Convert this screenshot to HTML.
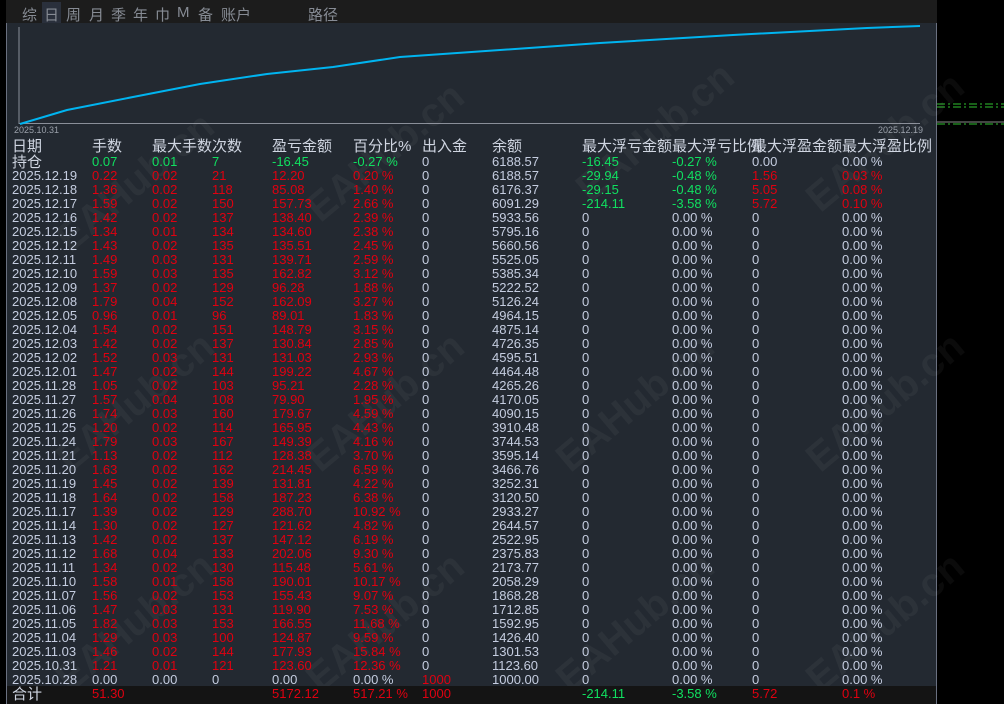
<!DOCTYPE html>
<html style="width:1004px;height:704px;overflow:hidden"><head><meta charset="utf-8"><style>
*{margin:0;padding:0}
body{width:1004px;height:704px;background:#000;overflow:hidden;font-family:"Liberation Sans","Noto Sans CJK SC",sans-serif}
#wrap{position:relative;width:1004px;height:704px;overflow:hidden}
#top{position:absolute;left:6px;top:0;width:931px;height:23px;background:#1c1c1c}
#top span{position:absolute;top:4px;font-size:15px;color:#868b94}
#panel{position:absolute;left:6px;top:23px;width:931px;height:681px;background:#232931;border-left:1px solid #6a7080;border-right:1px solid #6a7080;box-sizing:border-box}
.row{position:absolute;left:0;height:14px;line-height:14px;font-size:13px;color:#c5cde0;width:937px}
.row i{position:absolute;font-style:normal;white-space:nowrap}
.row i:nth-child(1){left:12px}.row i:nth-child(2){left:92px}.row i:nth-child(3){left:152px}.row i:nth-child(4){left:212px}
.row i:nth-child(5){left:272px}.row i:nth-child(6){left:353px}.row i:nth-child(7){left:422px}.row i:nth-child(8){left:492px}
.row i:nth-child(9){left:582px}.row i:nth-child(10){left:672px}.row i:nth-child(11){left:752px}.row i:nth-child(12){left:842px}
.r{color:#e00010}.n{color:#10e060}
.h{font-size:15px;height:16px;line-height:16px;color:#d0d6e2}
.wm{position:absolute;font-size:40px;font-weight:bold;color:rgba(255,255,255,0.045);transform:rotate(-40deg);white-space:nowrap}
</style></head><body><div id="wrap">
<div id="top">
<span style="left:16px">综</span><span style="left:36px;top:2px;background:#2a303c;padding:2px 2px;">日</span><span style="left:60px">周</span><span style="left:83px">月</span><span style="left:105px">季</span><span style="left:127px">年</span><span style="left:149px">巾</span><span style="left:171px">M</span><span style="left:192px">备</span><span style="left:215px">账户</span><span style="left:302px">路径</span>
</div>
<div id="panel"></div>
<svg style="position:absolute;left:0;top:0" width="1004" height="140">
<line x1="19" y1="27" x2="19" y2="124" stroke="#8a8f99" stroke-width="1"/>
<line x1="19" y1="123.5" x2="920" y2="123.5" stroke="#8a8f99" stroke-width="1"/>
<polyline fill="none" stroke="#00b4f0" stroke-width="2" points="20,124 67,110 133,97 200,84 267,74 333,67 400,57 600,43 733,35 867,28 920,26"/>
<text x="14" y="133" font-size="9" fill="#9aa0aa" font-family="Liberation Sans">2025.10.31</text>
<text x="878" y="133" font-size="9" fill="#9aa0aa" font-family="Liberation Sans">2025.12.19</text>
<line x1="937" y1="107" x2="1004" y2="107" stroke="#30c030" stroke-width="1" stroke-dasharray="8,3,2,3"/>
<line x1="937" y1="104" x2="1004" y2="104" stroke="#30c030" stroke-width="1" stroke-dasharray="8,3,2,3"/>
<line x1="937" y1="122" x2="1004" y2="122" stroke="#888" stroke-width="1"/>
<line x1="937" y1="124" x2="1004" y2="124" stroke="#30c030" stroke-width="1" stroke-dasharray="8,3,2,3"/>
</svg>
<div class="wm" style="left:40px;top:160px">EAHub.cn</div>
<div class="wm" style="left:290px;top:130px">EAHub.cn</div>
<div class="wm" style="left:560px;top:110px">EAHub.cn</div>
<div class="wm" style="left:790px;top:120px">EAHub.cn</div>
<div class="wm" style="left:40px;top:380px">EAHub.cn</div>
<div class="wm" style="left:290px;top:380px">EAHub.cn</div>
<div class="wm" style="left:540px;top:380px">EAHub.cn</div>
<div class="wm" style="left:790px;top:380px">EAHub.cn</div>
<div class="wm" style="left:40px;top:600px">EAHub.cn</div>
<div class="wm" style="left:290px;top:600px">EAHub.cn</div>
<div class="wm" style="left:540px;top:600px">EAHub.cn</div>
<div class="wm" style="left:790px;top:600px">EAHub.cn</div>

<div class="row h" style="top:139px"><i>日期</i><i>手数</i><i>最大手数</i><i>次数</i><i>盈亏金额</i><i>百分比%</i><i>出入金</i><i>余额</i><i>最大浮亏金额</i><i>最大浮亏比例</i><i>最大浮盈金额</i><i>最大浮盈比例</i></div>
<div class="row" style="top:155px"><i class="h" style="font-size:15px">持仓</i><i class="n">0.07</i><i class="n">0.01</i><i class="n">7</i><i class="n">-16.45</i><i class="n">-0.27 %</i><i>0</i><i>6188.57</i><i class="n">-16.45</i><i class="n">-0.27 %</i><i>0.00</i><i>0.00 %</i></div>
<div class="row" style="top:169px"><i>2025.12.19</i><i class="r">0.22</i><i class="r">0.02</i><i class="r">21</i><i class="r">12.20</i><i class="r">0.20 %</i><i>0</i><i>6188.57</i><i class="n">-29.94</i><i class="n">-0.48 %</i><i class="r">1.56</i><i class="r">0.03 %</i></div>
<div class="row" style="top:183px"><i>2025.12.18</i><i class="r">1.36</i><i class="r">0.02</i><i class="r">118</i><i class="r">85.08</i><i class="r">1.40 %</i><i>0</i><i>6176.37</i><i class="n">-29.15</i><i class="n">-0.48 %</i><i class="r">5.05</i><i class="r">0.08 %</i></div>
<div class="row" style="top:197px"><i>2025.12.17</i><i class="r">1.59</i><i class="r">0.02</i><i class="r">150</i><i class="r">157.73</i><i class="r">2.66 %</i><i>0</i><i>6091.29</i><i class="n">-214.11</i><i class="n">-3.58 %</i><i class="r">5.72</i><i class="r">0.10 %</i></div>
<div class="row" style="top:211px"><i>2025.12.16</i><i class="r">1.42</i><i class="r">0.02</i><i class="r">137</i><i class="r">138.40</i><i class="r">2.39 %</i><i>0</i><i>5933.56</i><i>0</i><i>0.00 %</i><i>0</i><i>0.00 %</i></div>
<div class="row" style="top:225px"><i>2025.12.15</i><i class="r">1.34</i><i class="r">0.01</i><i class="r">134</i><i class="r">134.60</i><i class="r">2.38 %</i><i>0</i><i>5795.16</i><i>0</i><i>0.00 %</i><i>0</i><i>0.00 %</i></div>
<div class="row" style="top:239px"><i>2025.12.12</i><i class="r">1.43</i><i class="r">0.02</i><i class="r">135</i><i class="r">135.51</i><i class="r">2.45 %</i><i>0</i><i>5660.56</i><i>0</i><i>0.00 %</i><i>0</i><i>0.00 %</i></div>
<div class="row" style="top:253px"><i>2025.12.11</i><i class="r">1.49</i><i class="r">0.03</i><i class="r">131</i><i class="r">139.71</i><i class="r">2.59 %</i><i>0</i><i>5525.05</i><i>0</i><i>0.00 %</i><i>0</i><i>0.00 %</i></div>
<div class="row" style="top:267px"><i>2025.12.10</i><i class="r">1.59</i><i class="r">0.03</i><i class="r">135</i><i class="r">162.82</i><i class="r">3.12 %</i><i>0</i><i>5385.34</i><i>0</i><i>0.00 %</i><i>0</i><i>0.00 %</i></div>
<div class="row" style="top:281px"><i>2025.12.09</i><i class="r">1.37</i><i class="r">0.02</i><i class="r">129</i><i class="r">96.28</i><i class="r">1.88 %</i><i>0</i><i>5222.52</i><i>0</i><i>0.00 %</i><i>0</i><i>0.00 %</i></div>
<div class="row" style="top:295px"><i>2025.12.08</i><i class="r">1.79</i><i class="r">0.04</i><i class="r">152</i><i class="r">162.09</i><i class="r">3.27 %</i><i>0</i><i>5126.24</i><i>0</i><i>0.00 %</i><i>0</i><i>0.00 %</i></div>
<div class="row" style="top:309px"><i>2025.12.05</i><i class="r">0.96</i><i class="r">0.01</i><i class="r">96</i><i class="r">89.01</i><i class="r">1.83 %</i><i>0</i><i>4964.15</i><i>0</i><i>0.00 %</i><i>0</i><i>0.00 %</i></div>
<div class="row" style="top:323px"><i>2025.12.04</i><i class="r">1.54</i><i class="r">0.02</i><i class="r">151</i><i class="r">148.79</i><i class="r">3.15 %</i><i>0</i><i>4875.14</i><i>0</i><i>0.00 %</i><i>0</i><i>0.00 %</i></div>
<div class="row" style="top:337px"><i>2025.12.03</i><i class="r">1.42</i><i class="r">0.02</i><i class="r">137</i><i class="r">130.84</i><i class="r">2.85 %</i><i>0</i><i>4726.35</i><i>0</i><i>0.00 %</i><i>0</i><i>0.00 %</i></div>
<div class="row" style="top:351px"><i>2025.12.02</i><i class="r">1.52</i><i class="r">0.03</i><i class="r">131</i><i class="r">131.03</i><i class="r">2.93 %</i><i>0</i><i>4595.51</i><i>0</i><i>0.00 %</i><i>0</i><i>0.00 %</i></div>
<div class="row" style="top:365px"><i>2025.12.01</i><i class="r">1.47</i><i class="r">0.02</i><i class="r">144</i><i class="r">199.22</i><i class="r">4.67 %</i><i>0</i><i>4464.48</i><i>0</i><i>0.00 %</i><i>0</i><i>0.00 %</i></div>
<div class="row" style="top:379px"><i>2025.11.28</i><i class="r">1.05</i><i class="r">0.02</i><i class="r">103</i><i class="r">95.21</i><i class="r">2.28 %</i><i>0</i><i>4265.26</i><i>0</i><i>0.00 %</i><i>0</i><i>0.00 %</i></div>
<div class="row" style="top:393px"><i>2025.11.27</i><i class="r">1.57</i><i class="r">0.04</i><i class="r">108</i><i class="r">79.90</i><i class="r">1.95 %</i><i>0</i><i>4170.05</i><i>0</i><i>0.00 %</i><i>0</i><i>0.00 %</i></div>
<div class="row" style="top:407px"><i>2025.11.26</i><i class="r">1.74</i><i class="r">0.03</i><i class="r">160</i><i class="r">179.67</i><i class="r">4.59 %</i><i>0</i><i>4090.15</i><i>0</i><i>0.00 %</i><i>0</i><i>0.00 %</i></div>
<div class="row" style="top:421px"><i>2025.11.25</i><i class="r">1.20</i><i class="r">0.02</i><i class="r">114</i><i class="r">165.95</i><i class="r">4.43 %</i><i>0</i><i>3910.48</i><i>0</i><i>0.00 %</i><i>0</i><i>0.00 %</i></div>
<div class="row" style="top:435px"><i>2025.11.24</i><i class="r">1.79</i><i class="r">0.03</i><i class="r">167</i><i class="r">149.39</i><i class="r">4.16 %</i><i>0</i><i>3744.53</i><i>0</i><i>0.00 %</i><i>0</i><i>0.00 %</i></div>
<div class="row" style="top:449px"><i>2025.11.21</i><i class="r">1.13</i><i class="r">0.02</i><i class="r">112</i><i class="r">128.38</i><i class="r">3.70 %</i><i>0</i><i>3595.14</i><i>0</i><i>0.00 %</i><i>0</i><i>0.00 %</i></div>
<div class="row" style="top:463px"><i>2025.11.20</i><i class="r">1.63</i><i class="r">0.02</i><i class="r">162</i><i class="r">214.45</i><i class="r">6.59 %</i><i>0</i><i>3466.76</i><i>0</i><i>0.00 %</i><i>0</i><i>0.00 %</i></div>
<div class="row" style="top:477px"><i>2025.11.19</i><i class="r">1.45</i><i class="r">0.02</i><i class="r">139</i><i class="r">131.81</i><i class="r">4.22 %</i><i>0</i><i>3252.31</i><i>0</i><i>0.00 %</i><i>0</i><i>0.00 %</i></div>
<div class="row" style="top:491px"><i>2025.11.18</i><i class="r">1.64</i><i class="r">0.02</i><i class="r">158</i><i class="r">187.23</i><i class="r">6.38 %</i><i>0</i><i>3120.50</i><i>0</i><i>0.00 %</i><i>0</i><i>0.00 %</i></div>
<div class="row" style="top:505px"><i>2025.11.17</i><i class="r">1.39</i><i class="r">0.02</i><i class="r">129</i><i class="r">288.70</i><i class="r">10.92 %</i><i>0</i><i>2933.27</i><i>0</i><i>0.00 %</i><i>0</i><i>0.00 %</i></div>
<div class="row" style="top:519px"><i>2025.11.14</i><i class="r">1.30</i><i class="r">0.02</i><i class="r">127</i><i class="r">121.62</i><i class="r">4.82 %</i><i>0</i><i>2644.57</i><i>0</i><i>0.00 %</i><i>0</i><i>0.00 %</i></div>
<div class="row" style="top:533px"><i>2025.11.13</i><i class="r">1.42</i><i class="r">0.02</i><i class="r">137</i><i class="r">147.12</i><i class="r">6.19 %</i><i>0</i><i>2522.95</i><i>0</i><i>0.00 %</i><i>0</i><i>0.00 %</i></div>
<div class="row" style="top:547px"><i>2025.11.12</i><i class="r">1.68</i><i class="r">0.04</i><i class="r">133</i><i class="r">202.06</i><i class="r">9.30 %</i><i>0</i><i>2375.83</i><i>0</i><i>0.00 %</i><i>0</i><i>0.00 %</i></div>
<div class="row" style="top:561px"><i>2025.11.11</i><i class="r">1.34</i><i class="r">0.02</i><i class="r">130</i><i class="r">115.48</i><i class="r">5.61 %</i><i>0</i><i>2173.77</i><i>0</i><i>0.00 %</i><i>0</i><i>0.00 %</i></div>
<div class="row" style="top:575px"><i>2025.11.10</i><i class="r">1.58</i><i class="r">0.01</i><i class="r">158</i><i class="r">190.01</i><i class="r">10.17 %</i><i>0</i><i>2058.29</i><i>0</i><i>0.00 %</i><i>0</i><i>0.00 %</i></div>
<div class="row" style="top:589px"><i>2025.11.07</i><i class="r">1.56</i><i class="r">0.02</i><i class="r">153</i><i class="r">155.43</i><i class="r">9.07 %</i><i>0</i><i>1868.28</i><i>0</i><i>0.00 %</i><i>0</i><i>0.00 %</i></div>
<div class="row" style="top:603px"><i>2025.11.06</i><i class="r">1.47</i><i class="r">0.03</i><i class="r">131</i><i class="r">119.90</i><i class="r">7.53 %</i><i>0</i><i>1712.85</i><i>0</i><i>0.00 %</i><i>0</i><i>0.00 %</i></div>
<div class="row" style="top:617px"><i>2025.11.05</i><i class="r">1.82</i><i class="r">0.03</i><i class="r">153</i><i class="r">166.55</i><i class="r">11.68 %</i><i>0</i><i>1592.95</i><i>0</i><i>0.00 %</i><i>0</i><i>0.00 %</i></div>
<div class="row" style="top:631px"><i>2025.11.04</i><i class="r">1.29</i><i class="r">0.03</i><i class="r">100</i><i class="r">124.87</i><i class="r">9.59 %</i><i>0</i><i>1426.40</i><i>0</i><i>0.00 %</i><i>0</i><i>0.00 %</i></div>
<div class="row" style="top:645px"><i>2025.11.03</i><i class="r">1.46</i><i class="r">0.02</i><i class="r">144</i><i class="r">177.93</i><i class="r">15.84 %</i><i>0</i><i>1301.53</i><i>0</i><i>0.00 %</i><i>0</i><i>0.00 %</i></div>
<div class="row" style="top:659px"><i>2025.10.31</i><i class="r">1.21</i><i class="r">0.01</i><i class="r">121</i><i class="r">123.60</i><i class="r">12.36 %</i><i>0</i><i>1123.60</i><i>0</i><i>0.00 %</i><i>0</i><i>0.00 %</i></div>
<div class="row" style="top:673px"><i>2025.10.28</i><i>0.00</i><i>0.00</i><i>0</i><i>0.00</i><i>0.00 %</i><i class="r">1000</i><i>1000.00</i><i>0</i><i>0.00 %</i><i>0</i><i>0.00 %</i></div>
<div style="position:absolute;left:7px;top:686px;width:929px;height:18px;background:#141414"></div>
<div class="row" style="top:687px"><i class="h" style="font-size:15px">合计</i><i class="r">51.30</i><i></i><i></i><i class="r">5172.12</i><i class="r">517.21 %</i><i class="r">1000</i><i></i><i class="n">-214.11</i><i class="n">-3.58 %</i><i class="r">5.72</i><i class="r">0.1 %</i></div>
</div></body></html>
